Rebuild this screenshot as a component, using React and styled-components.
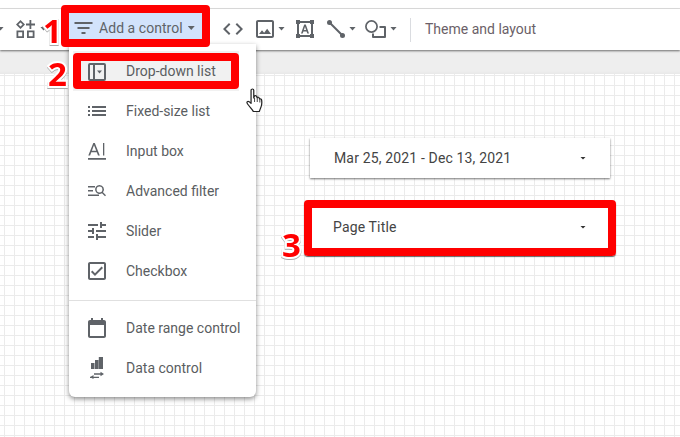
import React from "react";
import styled, { createGlobalStyle } from "styled-components";

const Global = createGlobalStyle`
  html, body { margin: 0; padding: 0; background: #fff; }
  body { font-family: Roboto, "Liberation Sans", sans-serif; }
`;

const Page = styled.div`
  position: relative;
  width: 680px;
  height: 437px;
  overflow: hidden;
  display: flex;
  flex-direction: column;
  background: #fff;
`;

const TopStrip = styled.div`
  height: 8px;
  border-bottom: 1px solid #e0e0e0;
  flex: none;
`;

const Toolbar = styled.div`
  position: relative;
  z-index: 1;
  height: 41px;
  flex: none;
  box-sizing: border-box;
  padding-bottom: 2px;
  display: flex;
  align-items: center;
  background: #fff;
  box-shadow: 0 1px 2px rgba(0, 0, 0, 0.55);
`;

const Tool = styled.svg`
  display: block;
  flex: none;
  margin-left: ${(p) => p.$ml || 0}px;
  fill: #5f6368;
`;

const Caret = styled.span`
  flex: none;
  width: 7px;
  height: 4px;
  margin-left: ${(p) => p.$ml || 0}px;
  background: #5f6368;
  clip-path: polygon(0 0, 100% 0, 50% 100%);
`;

const ControlButton = styled.div`
  flex: none;
  width: 133px;
  height: 26px;
  margin-left: ${(p) => p.$ml}px;
  margin-bottom: 5px;
  box-sizing: border-box;
  padding: 4px 0 0 5px;
  display: flex;
  align-items: center;
  background: #d2e3fc;
  color: #5f6368;
  font-size: 14px;
`;

const ButtonLabel = styled.span`
  margin-left: 6px;
  letter-spacing: 0.05px;
`;

const ToolDivider = styled.div`
  flex: none;
  width: 1px;
  height: 24px;
  margin: 3px 0 0 13px;
  background: #dadce0;
`;

const ThemeLink = styled.span`
  margin-left: 14px;
  font-size: 14px;
  color: #6b5f68;
`;

const Band = styled.div`
  height: 24px;
  flex: none;
  background: linear-gradient(#eeeeee 21px, #e8e8e8);
`;

const Canvas = styled.div`
  position: relative;
  flex: 1;
  background-color: #fff;
  background-image:
    linear-gradient(#ebebeb 1px, transparent 1px),
    linear-gradient(90deg, #ebebeb 1px, transparent 1px);
  background-size: 10px 10px;
  background-position: 4px 1px;
`;

const ControlCard = styled.div`
  position: absolute;
  left: 310px;
  top: ${(p) => p.$top}px;
  width: 300px;
  height: ${(p) => p.$h}px;
  box-sizing: border-box;
  padding: 0 24px;
  display: flex;
  align-items: center;
  justify-content: space-between;
  background: #fff;
  box-shadow: 0 1px 2px rgba(0, 0, 0, 0.55);
  font-size: 14px;
  letter-spacing: 0.15px;
  color: #444;
`;

const CardCaret = styled.span`
  width: 6px;
  height: 3px;
  background: #333;
  clip-path: polygon(0 0, 100% 0, 50% 100%);
`;

const TitleText = styled.span`
  margin-left: -1px;
`;

const Menu = styled.div`
  position: absolute;
  z-index: 2;
  left: 69px;
  top: 44px;
  width: 187px;
  box-sizing: border-box;
  padding: 7px 0 9px;
  background: #fff;
  border-radius: 0 0 6px 6px;
  box-shadow: 0 2px 5px rgba(0, 0, 0, 0.45);
`;

const MenuItem = styled.div`
  height: 40px;
  display: flex;
  align-items: center;
  gap: 20px;
  padding-left: 19px;
  font-size: 14px;
  color: #5a5d61;
`;

const HoverItem = styled(MenuItem)`
  margin: 0 17px 0 4px;
  padding-left: 15px;
  background: #f1f1f1;
`;

const IconSlot = styled.span`
  flex: none;
  width: 18px;
  height: 22px;
  padding-top: ${(p) => p.$drop || 0}px;
  display: flex;
  align-items: center;
  justify-content: center;
`;

const MenuDivider = styled.div`
  height: 1px;
  margin: 9px 0 7px;
  background: #e0e0e0;
`;

const RedBox = styled.div`
  position: absolute;
  z-index: 3;
  left: ${(p) => p.$x}px;
  top: ${(p) => p.$y}px;
  width: ${(p) => p.$w}px;
  height: ${(p) => p.$h}px;
  box-sizing: border-box;
  border: 8px solid #ff0000;
  border-radius: 4px;
  box-shadow: ${(p) => (p.$shadow ? "0 1px 1px rgba(0,0,0,0.6)" : "none")};
`;

const StepNumber = styled.span`
  position: absolute;
  z-index: 4;
  left: ${(p) => p.$x}px;
  top: ${(p) => p.$y}px;
  font-family: "Open Sans", "Liberation Sans", sans-serif;
  font-weight: 700;
  font-size: 33px;
  line-height: 33px;
  color: #ff0000;
  -webkit-text-stroke: 4px #fff;
  paint-order: stroke fill;
  filter: drop-shadow(0 1px 0 #aaa);
`;

const Pointer = styled.svg`
  position: absolute;
  z-index: 4;
  left: 246px;
  top: 88px;
`;

const p = {
  filter: "M10 18h4v-2h-4v2zM3 6v2h18V6H3zm3 7h12v-2H6v2z",
  code: "M9.4 16.6L4.8 12l4.6-4.6L8 6l-6 6 6 6 1.4-1.4zm5.2 0l4.6-4.6-4.6-4.6L16 6l6 6-6 6-1.4-1.4z",
  image:
    "M19 5v14H5V5h14m0-2H5c-1.1 0-2 .9-2 2v14c0 1.1.9 2 2 2h14c1.1 0 2-.9 2-2V5c0-1.1-.9-2-2-2zm-4.86 8.86l-3 3.87L9 13.14 6 17h12l-3.86-5.14z",
  list: "M3 13h2v-2H3v2zm0 4h2v-2H3v2zm0-8h2V7H3v2zm4 4h14v-2H7v2zm0 4h14v-2H7v2zM7 7v2h14V7H7z",
  tune: "M3 17v2h6v-2H3zM3 5v2h10V5H3zm10 16v-2h8v-2h-8v-2h-2v6h2zM7 9v2H3v2h4v2h2V9H7zm14 4v-2H11v2h10zm-6-4h2V7h4V5h-4V3h-2v6z",
  check:
    "M19 3H5c-1.1 0-2 .9-2 2v14c0 1.1.9 2 2 2h14c1.1 0 2-.9 2-2V5c0-1.1-.9-2-2-2zm0 16H5V5h14v14zM17.99 9l-1.41-1.42-6.59 6.59-2.58-2.57-1.42 1.41 4 3.99z",
  calendar:
    "M19 3h-1V1h-2v2H8V1H6v2H5c-1.1 0-2 .9-2 2v14c0 1.1.9 2 2 2h14c1.1 0 2-.9 2-2V5c0-1.1-.9-2-2-2zm0 16H5V8h14v11z",
};

const ComponentsIcon = ({ ml }) => (
  <Tool $ml={ml} width="19" height="18" viewBox="0.5 1 19 18">
    <path d="M5 1l4.500 4.500L5 10 .5 5.500z M5 3.400L2.900 5.500 5 7.600 7.100 5.500z" fillRule="evenodd" />
    <path d="M14 1h1.800v3.600h3.700v1.800h-3.700V10H14V6.400h-3.500V4.600H14z" />
    <path d="M1 11.500h7.500V19H1zM2.800 13.300v3.900h3.900v-3.900zM11.500 11.500H19V19h-7.500zM13.300 13.300v3.900h3.900v-3.900z" fillRule="evenodd" />
  </Tool>
);

const TextBoxIcon = ({ ml }) => (
  <Tool $ml={ml} width="18" height="18" viewBox="0 0 18 18">
    <path d="M0 0h4v1h10V0h4v4h-1v10h1v4h-4v-1H4v1H0v-4h1V4H0zM3 4v10h1v1h10v-1h1V4h-1V3H4v1z" fillRule="evenodd" />
    <path d="M8.200 4.500h1.600L13 13.500h-1.700l-.7-2H7.400l-.7 2H5zM7.900 10h2.200L9 6.700z" fillRule="evenodd" />
  </Tool>
);

const LineIcon = ({ ml }) => (
  <Tool $ml={ml} width="18" height="18" viewBox="0 0 18 18">
    <circle cx="2.500" cy="2.500" r="2.500" />
    <circle cx="15.500" cy="15.500" r="2.500" />
    <path d="M2.500 2.500l13 13" stroke="#5f6368" strokeWidth="2" />
  </Tool>
);

const ShapeIcon = ({ ml }) => (
  <Tool $ml={ml} width="21" height="18" viewBox="0 0 21 18">
    <circle cx="6.500" cy="6.500" r="5.600" fill="none" stroke="#5f6368" strokeWidth="1.700" />
    <path d="M14.500 7H20v10H8v-3.500" fill="none" stroke="#5f6368" strokeWidth="2" strokeLinejoin="round" />
  </Tool>
);

const DropdownIcon = () => (
  <Tool width="18" height="18" viewBox="0 0 18 18">
    <path d="M2 0h14a2 2 0 0 1 2 2v14a2 2 0 0 1-2 2H2a2 2 0 0 1-2-2V2a2 2 0 0 1 2-2zm0 2v14h3V2zm5 0v14h9V2z" fillRule="evenodd" />
    <path d="M9 7.500h5L11.500 10.500z" />
  </Tool>
);

const InputIcon = () => (
  <Tool width="18" height="17" viewBox="0 0 18 17">
    <path d="M5.300 0h1.500l5 12.500H10L8.800 9.300H3.300L2.100 12.500H.3zM3.900 7.800h4.300L6 2.200z" fillRule="evenodd" />
    <path d="M15 0h1.300v12.500H15zM0 15h18v1.700H0z" />
  </Tool>
);

const SearchFilterIcon = () => (
  <Tool width="18" height="12" viewBox="0 0 18 12">
    <path d="M0 1h7v1.400H0zM0 5h5v1.400H0zM0 9.500h11v1.400H0z" />
    <path d="M11.500 0a4.500 4.500 0 0 1 3.500 7.300l3 3-1 1-3-3A4.500 4.500 0 1 1 11.500 0zm0 1.600a2.900 2.900 0 1 0 0 5.800 2.900 2.900 0 0 0 0-5.800z" fillRule="evenodd" />
  </Tool>
);

const DataControlIcon = () => (
  <Tool width="14" height="22" viewBox="0 0 14 22">
    <path d="M1 6h3.500v6H1zM5 3h3.500v9H5zM8.800 0H13v12H8.800z" />
    <path d="M4 17h8M0 20.300h9" stroke="#5f6368" strokeWidth="1.300" />
    <path d="M10.500 14.800L14 17l-3.500 2.200zM3.500 18.100L0 20.300l3.500 1.700z" />
  </Tool>
);

const items = [
  { label: "Fixed-size list", icon: <Tool width="18" height="12" viewBox="3 7 18 10"><path d={p.list} /></Tool> },
  { label: "Input box", icon: <InputIcon /> },
  { label: "Advanced filter", icon: <SearchFilterIcon /> },
  { label: "Slider", icon: <Tool width="18" height="18" viewBox="3 3 18 18"><path d={p.tune} /></Tool> },
  { label: "Checkbox", icon: <Tool width="18" height="18" viewBox="3 3 18 18"><path d={p.check} /></Tool> },
];

const App = () => (
  <Page>
    <Global />
    <TopStrip />
    <Toolbar>
      <Caret $ml={-3} />
      <ComponentsIcon ml={12} />
      <Caret $ml={5} />
      <ControlButton $ml={22}>
        <Tool width="19" height="12" viewBox="3 6 18 12"><path d={p.filter} /></Tool>
        <ButtonLabel>Add a control</ButtonLabel>
        <Caret $ml={5} />
      </ControlButton>
      <Tool $ml={21} width="20" height="12" viewBox="2 6 20 12"><path d={p.code} /></Tool>
      <Tool $ml={13} width="18" height="18" viewBox="3 3 18 18"><path d={p.image} /></Tool>
      <Caret $ml={4} />
      <TextBoxIcon ml={11} />
      <LineIcon ml={13} />
      <Caret $ml={4} />
      <ShapeIcon ml={9} />
      <Caret $ml={4} />
      <ToolDivider />
      <ThemeLink>Theme and layout</ThemeLink>
    </Toolbar>
    <Band />
    <Canvas>
      <ControlCard $top={64} $h={40}>
        Mar 25, 2021 - Dec 13, 2021
        <CardCaret />
      </ControlCard>
      <ControlCard $top={132} $h={42}>
        <TitleText>Page Title</TitleText>
        <CardCaret />
      </ControlCard>
    </Canvas>

    <Menu>
      <HoverItem>
        <IconSlot $drop={2}><DropdownIcon /></IconSlot>
        Drop-down list
      </HoverItem>
      {items.map((item) => (
        <MenuItem key={item.label}>
          <IconSlot>{item.icon}</IconSlot>
          {item.label}
        </MenuItem>
      ))}
      <MenuDivider />
      <MenuItem>
        <IconSlot><Tool width="18" height="20" viewBox="3 1 18 20"><path d={p.calendar} /></Tool></IconSlot>
        Date range control
      </MenuItem>
      <MenuItem>
        <IconSlot><DataControlIcon /></IconSlot>
        Data control
      </MenuItem>
    </Menu>

    <RedBox $x={61} $y={5} $w={149} $h={42} />
    <RedBox $x={73} $y={53} $w={166} $h={36} />
    <RedBox $x={304} $y={200} $w={312} $h={56} $shadow />

    <StepNumber $x={43} $y={14}>1</StepNumber>
    <StepNumber $x={48} $y={57}>2</StepNumber>
    <StepNumber $x={282} $y={228}>3</StepNumber>

    <Pointer width="18" height="26" viewBox="0 0 16 26" preserveAspectRatio="none">
      <path
        d="M4.500 2.200c0-1.600 2.400-1.600 2.400 0V10l.6-2c.8-.7 1.800-.3 2 .6l.3 1c.7-.8 1.800-.4 2 .5l.2 1c.8-.5 1.800 0 1.900 1 .3 2.500.2 5-.6 7-.6 1.700-1 3-1.500 4.400H6.500C5.800 21.600 4 19.800 2.800 18 1.800 16.800.8 15.500.8 14.500c.1-1 1-1.400 2-.8l1.700 1.600z"
        fill="#fff"
        stroke="#222"
        strokeWidth="1.100"
        strokeLinejoin="round"
      />
      <path d="M7.600 10v4M10 10v4M12.300 11.500v3" stroke="#222" strokeWidth="0.800" />
    </Pointer>
  </Page>
);

export default App;
